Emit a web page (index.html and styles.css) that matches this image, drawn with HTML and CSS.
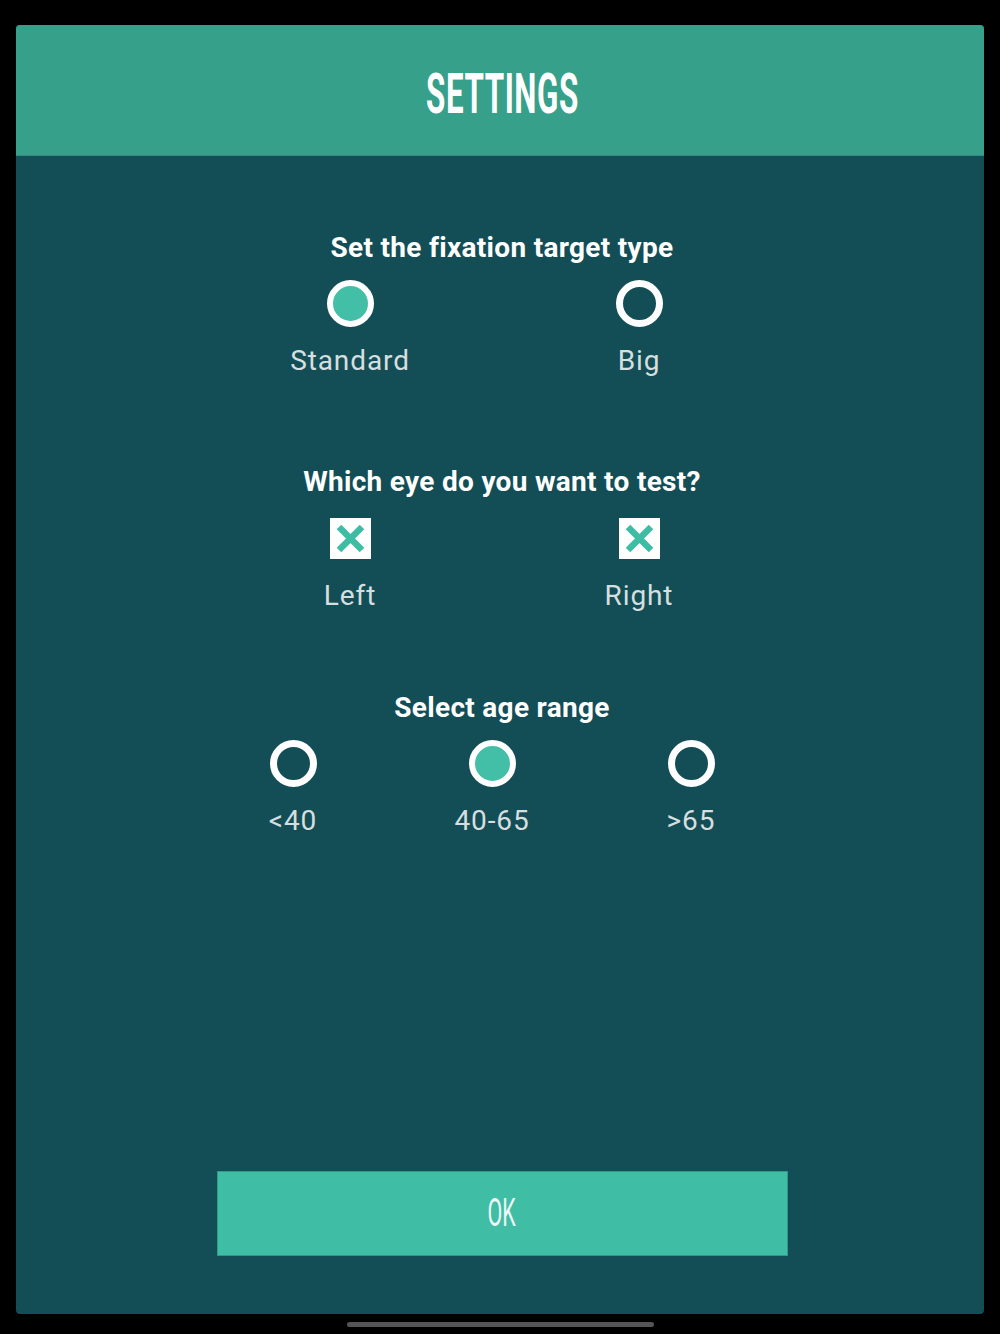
FILE: index.html
```html
<!DOCTYPE html>
<html lang="en">
<head>
    <meta charset="UTF-8">
    <meta name="viewport" content="width=device-width, initial-scale=1.0">
    <title>Settings</title>

    <link rel="stylesheet" href="styles.css">
</head>
<body>
    <div class="screen">
        <div class="card">
            <div class="header">
                <h1><span>SETTINGS</span></h1>
            </div>

            <div class="content">
                <!-- Fixation target -->
                <div class="section section-target">
                    <h2>Set the fixation target type</h2>
                    <div class="options two">
                        <div class="option">
                            <span class="radio checked"></span>
                            <span class="label">Standard</span>
                        </div>
                        <div class="option">
                            <span class="radio"></span>
                            <span class="label">Big</span>
                        </div>
                    </div>
                </div>

                <!-- Eye -->
                <div class="section section-eye">
                    <h2>Which eye do you want to test?</h2>
                    <div class="options two">
                        <div class="option">
                            <span class="checkbox">
                                <svg viewBox="0 0 41 41" width="41" height="41">
                                    <path d="M9 9 L32 32 M32 9 L9 32" stroke="#3fbca4" stroke-width="6.5" stroke-linecap="butt"/>
                                </svg>
                            </span>
                            <span class="label">Left</span>
                        </div>
                        <div class="option">
                            <span class="checkbox">
                                <svg viewBox="0 0 41 41" width="41" height="41">
                                    <path d="M9 9 L32 32 M32 9 L9 32" stroke="#3fbca4" stroke-width="6.5" stroke-linecap="butt"/>
                                </svg>
                            </span>
                            <span class="label">Right</span>
                        </div>
                    </div>
                </div>

                <!-- Age -->
                <div class="section section-age">
                    <h2>Select age range</h2>
                    <div class="options three">
                        <div class="option">
                            <span class="radio"></span>
                            <span class="label">&lt;40</span>
                        </div>
                        <div class="option">
                            <span class="radio checked"></span>
                            <span class="label">40-65</span>
                        </div>
                        <div class="option">
                            <span class="radio"></span>
                            <span class="label">&gt;65</span>
                        </div>
                    </div>
                </div>

                <button class="ok-button"><span>OK</span></button>
            </div>
        </div>
        <div class="home-bar"></div>
    </div>
</body>
</html>
```

FILE: styles.css
```css
body {
    margin: 0;
    padding: 0;
    background-color: #000;
    font-family: Roboto, "Noto Sans", Arial, sans-serif;
}

.screen {
    width: 1000px;
    height: 1334px;
    padding-top: 25px;
    box-sizing: border-box;
}

.card {
    margin: 0 16px;
    height: 1289px;
    background-color: #134e57;
    border-radius: 4px;
    overflow: hidden;
    display: flex;
    flex-direction: column;
}

.header {
    height: 131px;
    background-color: #36a08a;
    border-bottom: 1px solid #2f8f7c;
    box-sizing: border-box;
    display: flex;
    align-items: center;
    justify-content: center;
}

.header h1 {
    margin: 0;
    color: #fff;
    font-size: 56px;
    font-weight: bold;
    line-height: 1;
    padding-top: 8px;
    padding-left: 4px;
}

.header h1 span {
    display: inline-block;
    transform: scaleX(0.56);
    letter-spacing: 1px;
}

.content {
    flex: 1;
    display: flex;
    flex-direction: column;
    align-items: center;
    padding-top: 77px;
}

.section {
    display: flex;
    flex-direction: column;
    align-items: center;
}

.section h2 {
    margin: 0;
    padding-left: 4px;
    color: #fff;
    font-size: 28px;
    font-weight: bold;
    line-height: 30px;
    letter-spacing: 0.3px;
}

.section-eye {
    margin-top: 89px;
}

.section-age {
    margin-top: 80px;
}

.options {
    display: flex;
    justify-content: center;
}

.options.two {
    gap: 89px;
    padding-right: 11px;
}

.options.two .option {
    width: 200px;
}

.options.three {
    gap: 0;
    padding-right: 16px;
}

.options.three .option {
    width: 199px;
}

.option {
    display: flex;
    flex-direction: column;
    align-items: center;
}

.label {
    color: #d6dfdf;
    font-size: 28px;
    line-height: 34px;
    letter-spacing: 0.9px;
}

.radio {
    display: block;
    width: 47px;
    height: 47px;
    border-radius: 50%;
    border: 7px solid #fff;
    box-sizing: border-box;
    margin-top: 17px;
    margin-bottom: 17px;
}

.radio.checked {
    border-width: 6px;
    background-color: #42bfa6;
}

.checkbox {
    display: block;
    width: 41px;
    height: 41px;
    background-color: #fff;
    margin-top: 21px;
    margin-bottom: 20px;
}

.checkbox svg {
    display: block;
}

.ok-button {
    margin-top: auto;
    margin-bottom: 58px;
    width: 571px;
    height: 85px;
    background-color: #3fbda5;
    border: 1px solid #2e9a88;
    color: #f0f8f6;
    font-family: Roboto, Arial, sans-serif;
    font-size: 39px;
    line-height: 1;
    cursor: pointer;
    position: relative;
    left: 2px;
}

.ok-button span {
    display: inline-block;
    transform: scaleX(0.55);
}

.home-bar {
    width: 307px;
    height: 5px;
    margin: 8px auto 0;
    border-radius: 3px;
    background-color: #555;
}
```
